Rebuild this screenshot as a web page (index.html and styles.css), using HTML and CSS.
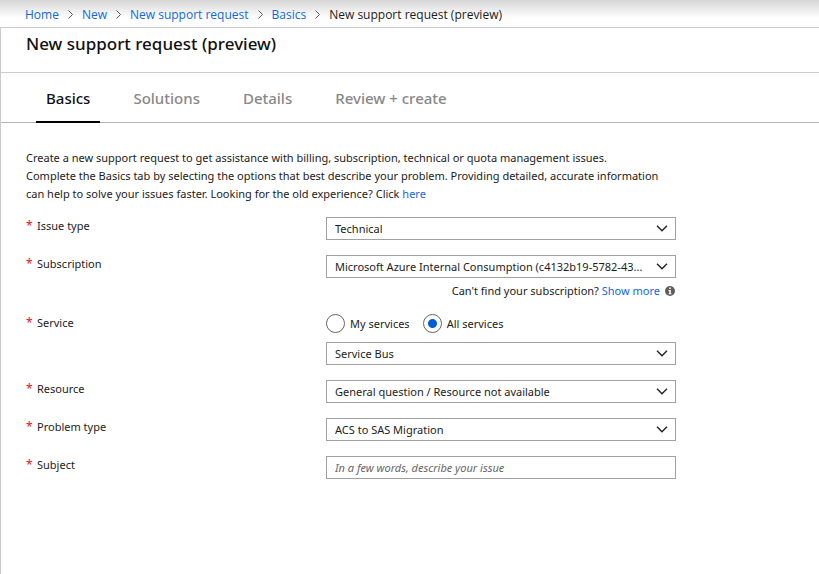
FILE: index.html
```html
<!DOCTYPE html>
<html lang="en">
<head>
<meta charset="utf-8">
<title>New support request (preview)</title>
<link rel="stylesheet" href="styles.css">
</head>
<body>
<nav class="crumbs" aria-label="Breadcrumb">
  <a href="#">Home</a>
  <svg class="sep" viewBox="0 0 5 9"><path d="M.5.5l4 4-4 4"/></svg>
  <a href="#">New</a>
  <svg class="sep" viewBox="0 0 5 9"><path d="M.5.5l4 4-4 4"/></svg>
  <a href="#">New support request</a>
  <svg class="sep" viewBox="0 0 5 9"><path d="M.5.5l4 4-4 4"/></svg>
  <a href="#">Basics</a>
  <svg class="sep" viewBox="0 0 5 9"><path d="M.5.5l4 4-4 4"/></svg>
  <span>New support request (preview)</span>
</nav>
<main class="blade">
  <header class="blade-head"><h1>New support request (preview)</h1></header>
  <div class="tabs" role="tablist">
    <button class="tab active" role="tab" aria-selected="true">Basics</button>
    <button class="tab" role="tab">Solutions</button>
    <button class="tab" role="tab">Details</button>
    <button class="tab" role="tab">Review + create</button>
  </div>
  <form class="form">
    <p class="intro">Create a new support request to get assistance with billing, subscription, technical or quota management issues.<br>Complete the Basics tab by selecting the options that best describe your problem. Providing detailed, accurate information<br>can help to solve your issues faster. Looking for the old experience? Click <a href="#">here</a></p>
    <div class="row">
      <label class="label" for="issue"><span class="req">*</span>Issue type</label>
      <div class="field">
        <div class="pick"><select id="issue"><option>Technical</option></select><svg class="chev" viewBox="0 0 12 7"><path d="M1 .8l5 5 5-5"/></svg></div>
      </div>
    </div>
    <div class="row">
      <label class="label" for="sub"><span class="req">*</span>Subscription</label>
      <div class="field">
        <div class="pick"><select id="sub"><option>Microsoft Azure Internal Consumption (c4132b19-5782-43...</option></select><svg class="chev" viewBox="0 0 12 7"><path d="M1 .8l5 5 5-5"/></svg></div>
        <div class="hint"><span>Can't find your subscription? <a href="#">Show more</a></span><svg class="info" viewBox="0 0 10 10"><circle cx="5" cy="5" r="5" fill="#605e5c"/><path d="M4.2 1.6h1.6v1.5H4.2zM3.5 4h2.3v3.4h.8v.9H3.5v-.9h.8V4.9h-.8z" fill="#fff"/></svg></div>
      </div>
    </div>
    <div class="row">
      <label class="label" for="service"><span class="req">*</span>Service</label>
      <div class="field">
        <div class="radios">
          <label><input type="radio" name="scope">My services</label>
          <label><input type="radio" name="scope" checked>All services</label>
        </div>
        <div class="pick"><select id="service"><option>Service Bus</option></select><svg class="chev" viewBox="0 0 12 7"><path d="M1 .8l5 5 5-5"/></svg></div>
      </div>
    </div>
    <div class="row">
      <label class="label" for="resource"><span class="req">*</span>Resource</label>
      <div class="field">
        <div class="pick"><select id="resource"><option>General question / Resource not available</option></select><svg class="chev" viewBox="0 0 12 7"><path d="M1 .8l5 5 5-5"/></svg></div>
      </div>
    </div>
    <div class="row">
      <label class="label" for="problem"><span class="req">*</span>Problem type</label>
      <div class="field">
        <div class="pick"><select id="problem"><option>ACS to SAS Migration</option></select><svg class="chev" viewBox="0 0 12 7"><path d="M1 .8l5 5 5-5"/></svg></div>
      </div>
    </div>
    <div class="row">
      <label class="label" for="subject"><span class="req">*</span>Subject</label>
      <div class="field"><input class="text" id="subject" type="text" placeholder="In a few words, describe your issue"></div>
    </div>
  </form>
</main>
</body>
</html>
```
FILE: styles.css
```css
* { box-sizing: border-box; }
body {
  margin: 0;
  min-height: 100vh;
  display: flex;
  flex-direction: column;
  background: #fff;
  color: #1b1b1b;
  font: 11px/18px "Noto Sans", "Open Sans", sans-serif;
}
a { color: #0f68e0; text-decoration: none; }
input, select, button { font: inherit; color: inherit; }
.crumbs {
  display: flex;
  align-items: center;
  gap: 9px;
  height: 27px;
  padding: 2px 25px 0;
  font-family: "Open Sans", "Noto Sans", sans-serif;
  font-size: 12px;
  white-space: nowrap;
  background: linear-gradient(#d6d6d6, #fff 18px);
}
.sep { width: 5px; height: 9px; fill: none; stroke: #555; }
.blade { flex: 1; border: solid #ccc; border-width: 1px 0 0 1px; }
.blade-head { height: 45px; padding: 4px 25px 0; border-bottom: 1px solid #ccc; }
h1 { margin: 0; font-size: 17px; line-height: 24px; font-weight: 500; color: #111; }
.tabs {
  display: flex;
  gap: 23px;
  height: 50px;
  padding: 0 35px;
  border-bottom: 1px solid #b5b5b5;
}
.tab {
  height: 50px;
  padding: 2px 10px 0;
  border: 0;
  border-bottom: 2px solid transparent;
  background: none;
  color: #888;
  font-size: 15px;
  font-weight: 500;
  white-space: nowrap;
}
.tab.active { color: #111; border-bottom-color: #000; }
.form { max-width: 700px; padding: 26px 25px; }
.intro { margin: 0 0 14px; white-space: nowrap; }
.row { display: grid; grid-template-columns: 300px 1fr; margin-bottom: 15px; }
.label { display: flex; gap: 5px; height: 18px; }
.req { width: 6px; color: #e81123; font-size: 12px; }
.pick { display: grid; align-items: center; }
.pick > * { grid-area: 1 / 1; }
.pick select, .text {
  display: block;
  width: 100%;
  height: 23px;
  padding: 0 8px;
  border: 1px solid #a0a0a0;
  border-radius: 0;
  background: #fff;
}
.pick select { appearance: none; }
.text::placeholder { color: #666; font-style: italic; opacity: 1; }
.chev {
  justify-self: end;
  width: 12px;
  height: 7px;
  margin-right: 8px;
  fill: none;
  stroke: #222;
  stroke-width: 1.4;
  pointer-events: none;
}
.hint {
  display: flex;
  justify-content: flex-end;
  align-items: center;
  gap: 5px;
  height: 21px;
  padding: 5px 1px 0 0;
  white-space: nowrap;
}
.info { width: 10px; height: 10px; }
.radios { display: flex; gap: 13px; height: 28px; }
.radios label { display: flex; align-items: center; gap: 5px; height: 19px; }
.radios input {
  appearance: none;
  width: 19px;
  height: 19px;
  margin: 0;
  border: 1px solid #666;
  border-radius: 50%;
}
.radios input:checked { background: radial-gradient(circle, #015cda 4px, transparent 5px); }
```
